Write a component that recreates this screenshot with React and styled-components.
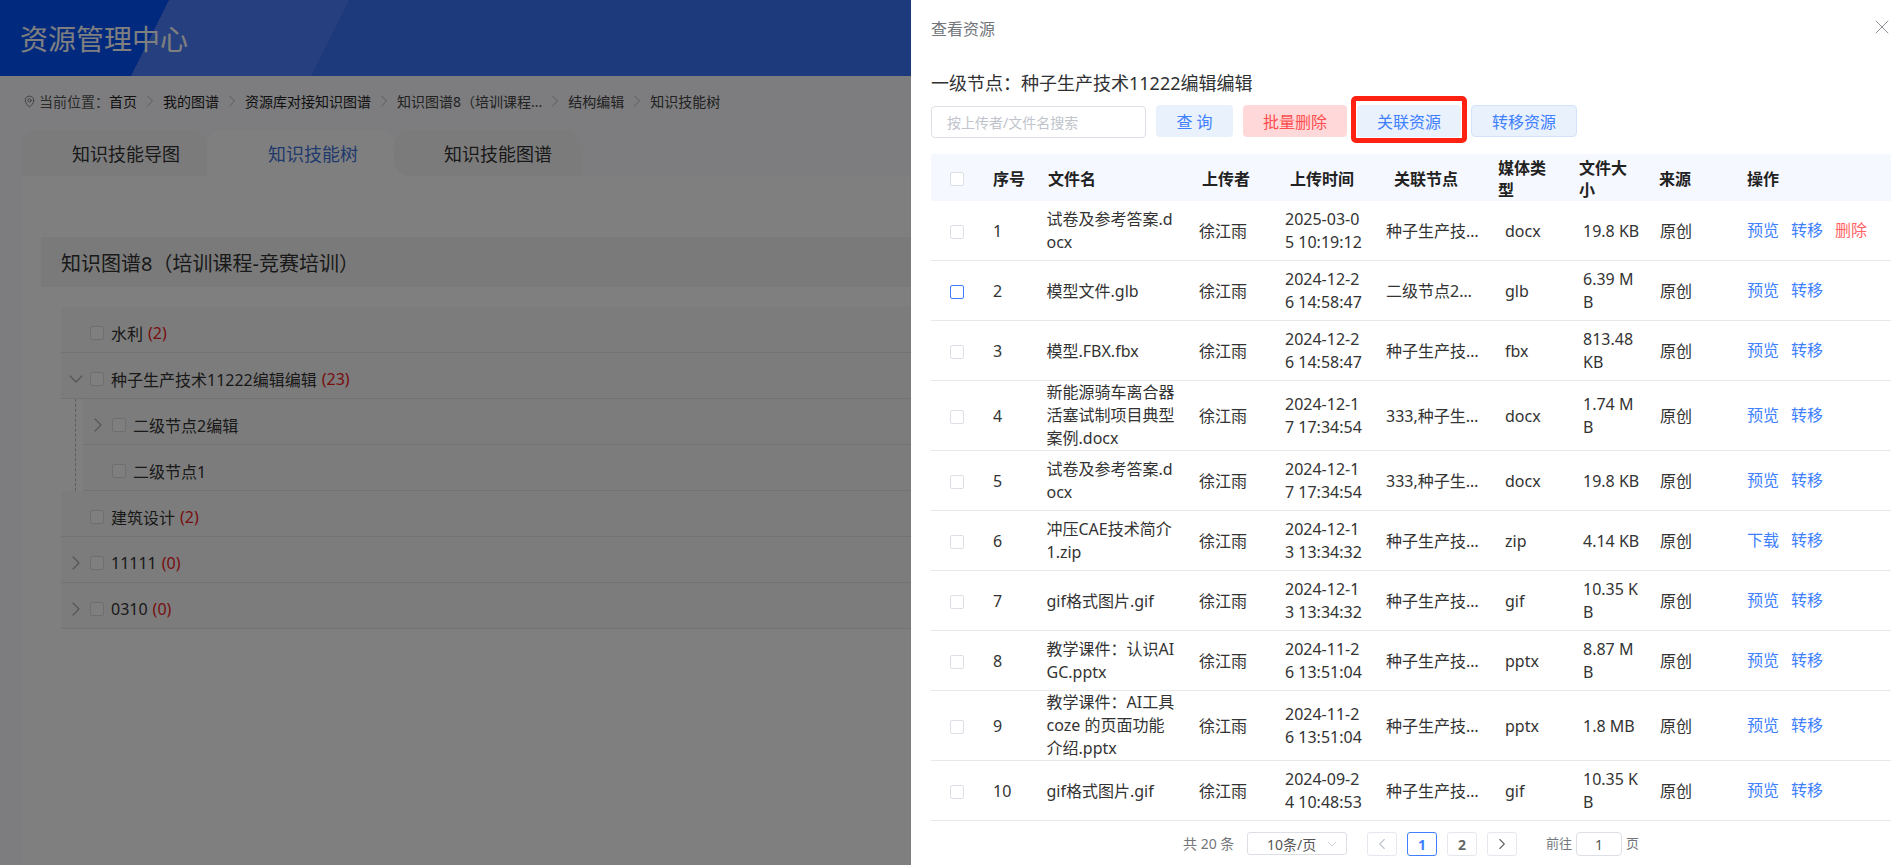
import React from 'react';
import styled, { createGlobalStyle } from 'styled-components';
import { ChevronDown, ChevronLeft, ChevronRight, MapPin, X } from 'lucide-react';

const fontStack = `"Noto Sans", "Noto Sans CJK SC", sans-serif`;

const GlobalStyle = createGlobalStyle`
   html, body {
      margin: 0;
      height: 100%;
      overflow: hidden;
      font-family: ${fontStack};
      background: #fafbfe;
   }
   * {
      box-sizing: border-box;
   }
`;

const Page = styled.div`
   height: 865px;
   overflow: hidden;
   display: flex;
   flex-direction: column;
`;

const Banner = styled.header`
   height: 76px;
   flex-shrink: 0;
   padding-left: 20px;
   display: flex;
   align-items: center;
   background: linear-gradient(116.57deg, #0254ff 0 151px, #4c80ff 151px 312px, #3874f8 312px);
   color: #fff;
   font-size: 28px;
`;

const Crumbs = styled.nav`
   height: 54px;
   flex-shrink: 0;
   padding: 0 0 4px 23px;
   display: flex;
   align-items: center;
   gap: 3px;
   font-size: 14px;
   color: #555;
`;

const CrumbItem = styled.span`
   color: ${(p) => (p.$strong ? '#222' : '#444')};
`;

const CrumbSep = styled(ChevronRight)`
   color: #aaa;
`;

const TabBar = styled.div`
   margin-left: 21px;
   width: 560px;
   height: 46px;
   flex-shrink: 0;
   display: flex;
   background: linear-gradient(transparent 50%, #fff 50%);
`;

const Tab = styled.div`
   width: ${(p) => p.$w}px;
   padding-left: ${(p) => p.$pad}px;
   display: flex;
   align-items: center;
   font-size: 18px;
   color: ${(p) => (p.$active ? '#3f73d8' : '#333')};
   background: ${(p) => (p.$active ? '#fff' : '#f7f7f8')};
   border-radius: ${(p) => (p.$afterActive ? '16px 16px 0 16px' : '16px 16px 0 0')};
`;

const Card = styled.main`
   flex: 1;
   margin-left: 21px;
   padding: 61px 0 0 20px;
   background: #fff;
`;

const CardTitle = styled.h2`
   margin: 0;
   height: 50px;
   padding-left: 20px;
   display: flex;
   align-items: center;
   font-size: 20px;
   font-weight: 400;
   color: #333;
   background: #f5f5f5;
`;

const Tree = styled.div`
   margin: 20px 0 0 20px;
`;

const TreeRow = styled.div`
   position: relative;
   height: 46px;
   margin-left: ${(p) => (p.$child ? 22 : 0)}px;
   padding-top: 7px;
   display: flex;
   align-items: center;
   background: #f9f9f9;
   border-bottom: 1px solid #e6e6e6;
   font-size: 16px;
   color: #333;
`;

const Caret = styled.span`
   width: 29px;
   display: flex;
   justify-content: center;
   padding-left: 1px;
   color: #aaa;
`;

const ChildLine = styled.div`
   position: relative;
   &::before {
      content: '';
      position: absolute;
      left: 14px;
      top: 0;
      bottom: 0;
      border-left: 1px dashed #bbb;
   }
`;

const Count = styled.span`
   margin-left: 5px;
   color: #f02020;
`;

const Box = styled.span`
   display: block;
   flex-shrink: 0;
   width: 14px;
   height: 14px;
   border: 1px solid ${(p) => (p.$active ? '#4080ff' : '#dcdfe6')};
   border-radius: 2px;
   background: #fff;
`;

const TreeBox = styled(Box)`
   margin-right: 7px;
`;

const RowBox = styled(Box)`
   margin-top: 1px;
`;

const Mask = styled.div`
   position: fixed;
   inset: 0;
   background: rgba(0, 0, 0, 0.5);
`;

const Drawer = styled.aside`
   position: fixed;
   top: 0;
   right: 0;
   bottom: 0;
   width: 991px;
   padding: 0 11px 0 20px;
   display: flex;
   flex-direction: column;
   background: #fff;
`;

const DrawerHead = styled.div`
   height: 56px;
   display: flex;
   align-items: center;
   justify-content: space-between;
   font-size: 16px;
   color: #72767b;
`;

const CloseIcon = styled(X)`
   margin: 0 -3px 2px 0;
   color: #909399;
`;

const NodeTitle = styled.div`
   height: 49px;
   padding-top: 14px;
   font-size: 18px;
   line-height: 26px;
   color: #303133;
`;

const Toolbar = styled.div`
   display: flex;
   align-items: flex-start;
   gap: 10px;
   height: 32px;
`;

const SearchInput = styled.input`
   width: 215px;
   height: 32px;
   margin-top: 1px;
   padding: 0 15px;
   border: 1px solid #dcdfe6;
   border-radius: 4px;
   outline: none;
   font-family: ${fontStack};
   font-size: 14px;
   &::placeholder {
      color: #c0c4cc;
   }
`;

const ToolButton = styled.button`
   position: relative;
   width: ${(p) => p.$w}px;
   height: 32px;
   padding: 0;
   border: 1px solid ${(p) => (p.$outlined ? '#d4e3fb' : 'transparent')};
   border-radius: 4px;
   font-family: ${fontStack};
   font-size: 16px;
   color: ${(p) => (p.$danger ? '#ff4d4f' : '#4080ff')};
   background: ${(p) => (p.$danger ? '#ffd9d9' : '#e9f1fd')};
`;

const Highlight = styled.span`
   position: absolute;
   inset: -10px -7px -7px -7px;
   border: 5px solid #ff2213;
   border-radius: 5px;
`;

const TableWrap = styled.div`
   margin-top: 17px;
`;

const Table = styled.table`
   width: 960px;
   table-layout: fixed;
   border-collapse: separate;
   border-spacing: 0;
   font-size: 16px;
   line-height: 23px;
`;

const HeadCell = styled.th`
   height: 47px;
   padding: 3px ${(p) => p.$right || 0}px 0 ${(p) => p.$pad}px;
   font-weight: 700;
   line-height: 22px;
   text-align: left;
   color: #222;
   background: #f5f8ff;
`;

const Cell = styled.td`
   padding: ${(p) => (p.$tight ? 0 : 1)}px ${(p) => p.$right || 0}px 0 ${(p) => p.$pad}px;
   height: ${(p) => p.$h}px;
   border-bottom: 1px solid #e6e8eb;
   color: #333;
   word-break: break-all;
   vertical-align: middle;
`;

const Ellipsis = styled.div`
   white-space: nowrap;
   overflow: hidden;
   text-overflow: ellipsis;
`;

const Ops = styled.div`
   display: flex;
   gap: 12px;
   margin-top: -2px;
`;

const OpLink = styled.a`
   color: ${(p) => (p.$danger ? '#ff6464' : '#4080ff')};
`;

const Pager = styled.div`
   flex: 1;
   padding: 11px 0 0 252px;
   display: flex;
   align-items: flex-start;
   font-size: 14px;
   color: #72767b;
`;

const Total = styled.span`
   width: 64px;
   line-height: 23px;
`;

const PageSize = styled.div`
   width: 100px;
   height: 23px;
   margin-right: 20px;
   padding: 0 6px 0 19px;
   display: flex;
   align-items: center;
   justify-content: space-between;
   border: 1px solid #dcdfe6;
   border-radius: 3px;
   color: #555;
`;

const PageButton = styled.button`
   width: 30px;
   height: 24px;
   margin-right: 10px;
   padding: 0;
   display: flex;
   align-items: center;
   justify-content: center;
   border: 1px solid ${(p) => (p.$active ? '#4080ff' : '#e4e7ed')};
   border-radius: 3px;
   background: #fff;
   font-family: ${fontStack};
   font-size: 14px;
   font-weight: 700;
   color: ${(p) => (p.$active ? '#4080ff' : '#666')};
`;

const JumpLabel = styled.span`
   line-height: 23px;
   font-size: 13px;
   margin-left: ${(p) => p.$left || 0}px;
`;

const JumpInput = styled.input`
   width: 46px;
   height: 24px;
   margin: 0 4px;
   border: 1px solid #dcdfe6;
   border-radius: 4px;
   text-align: center;
   outline: none;
   font-family: ${fontStack};
   font-size: 14px;
   color: #555;
`;

const columns = [
   { title: '', w: 54, head: 19, body: 19 },
   { title: '序号', w: 55, head: 8, body: 8 },
   { title: '文件名', w: 152, head: 8, body: 6.5, right: 15 },
   { title: '上传者', w: 86, head: 10, body: 7 },
   { title: '上传时间', w: 100, head: 12, body: 7, right: 15 },
   { title: '关联节点', w: 112, head: 16, body: 8, right: 6 },
   { title: '媒体类型', w: 82, head: 8, body: 15, headRight: 16 },
   { title: '文件大小', w: 80, head: 7, body: 11, right: 9, headRight: 16 },
   { title: '来源', w: 88, head: 7, body: 8 },
   { title: '操作', w: 151, head: 7, body: 7 },
];

const rows = [
   { id: 1, name: '试卷及参考答案.docx', time: '2025-03-05 10:19:12', node: '种子生产技术11222编辑编辑', type: 'docx', size: '19.8 KB', del: true },
   { id: 2, name: '模型文件.glb', time: '2024-12-26 14:58:47', node: '二级节点2编辑编辑编辑', type: 'glb', size: '6.39 MB', checked: true },
   { id: 3, name: '模型.FBX.fbx', time: '2024-12-26 14:58:47', node: '种子生产技术11222编辑编辑', type: 'fbx', size: '813.48 KB' },
   { id: 4, name: '新能源骑车离合器活塞试制项目典型案例.docx', time: '2024-12-17 17:34:54', node: '333,种子生产技术11222', type: 'docx', size: '1.74 MB', h: 70 },
   { id: 5, name: '试卷及参考答案.docx', time: '2024-12-17 17:34:54', node: '333,种子生产技术11222', type: 'docx', size: '19.8 KB' },
   { id: 6, name: '冲压CAE技术简介1.zip', time: '2024-12-13 13:34:32', node: '种子生产技术11222编辑编辑', type: 'zip', size: '4.14 KB', download: true },
   { id: 7, name: 'gif格式图片.gif', time: '2024-12-13 13:34:32', node: '种子生产技术11222编辑编辑', type: 'gif', size: '10.35 KB' },
   { id: 8, name: '教学课件：认识AIGC.pptx', time: '2024-11-26 13:51:04', node: '种子生产技术11222编辑编辑', type: 'pptx', size: '8.87 MB' },
   { id: 9, name: '教学课件：AI工具coze 的页面功能介绍.pptx', time: '2024-11-26 13:51:04', node: '种子生产技术11222编辑编辑', type: 'pptx', size: '1.8 MB', h: 70 },
   { id: 10, name: 'gif格式图片.gif', time: '2024-09-24 10:48:53', node: '种子生产技术11222编辑编辑', type: 'gif', size: '10.35 KB' },
];

const crumbs = ['我的图谱', '资源库对接知识图谱', '知识图谱8（培训课程...', '结构编辑', '知识技能树'];

const renderCells = (row) => {
   const values = [
      <RowBox $active={row.checked} />,
      row.id,
      row.name,
      '徐江雨',
      row.time,
      <Ellipsis>{row.node}</Ellipsis>,
      row.type,
      row.size,
      '原创',
      <Ops>
         <OpLink>{row.download ? '下载' : '预览'}</OpLink>
         <OpLink>转移</OpLink>
         {row.del && <OpLink $danger>删除</OpLink>}
      </Ops>,
   ];
   return values.map((value, i) => (
      <Cell
         key={i}
         $h={row.h || 60}
         $tight={row.h && i === 2}
         $pad={columns[i].body}
         $right={columns[i].right}>
         {value}
      </Cell>
   ));
};

const ResourceDrawer = () => (
   <Drawer>
      <DrawerHead>
         查看资源
         <CloseIcon size={24} strokeWidth={1} />
      </DrawerHead>
      <NodeTitle>一级节点：种子生产技术11222编辑编辑</NodeTitle>
      <Toolbar>
         <SearchInput placeholder="按上传者/文件名搜索" />
         <ToolButton $w={77}>查 询</ToolButton>
         <ToolButton $w={104} $danger>批量删除</ToolButton>
         <ToolButton $w={104}>
            关联资源
            <Highlight />
         </ToolButton>
         <ToolButton $w={106} $outlined>转移资源</ToolButton>
      </Toolbar>
      <TableWrap>
         <Table>
            <colgroup>
               {columns.map((c, i) => <col key={i} width={c.w} />)}
            </colgroup>
            <thead>
               <tr>
                  {columns.map((c, i) => (
                     <HeadCell key={i} $pad={c.head} $right={c.headRight}>{c.title || <Box />}</HeadCell>
                  ))}
               </tr>
            </thead>
            <tbody>
               {rows.map((row) => <tr key={row.id}>{renderCells(row)}</tr>)}
            </tbody>
         </Table>
      </TableWrap>
      <Pager>
         <Total>共 20 条</Total>
         <PageSize>
            10条/页
            <ChevronDown size={16} strokeWidth={1.2} color="#c0c4cc" />
         </PageSize>
         <PageButton><ChevronLeft size={18} strokeWidth={1.5} color="#c0c4cc" /></PageButton>
         <PageButton $active>1</PageButton>
         <PageButton>2</PageButton>
         <PageButton><ChevronRight size={18} strokeWidth={1.5} color="#666" /></PageButton>
         <JumpLabel $left={19}>前往</JumpLabel>
         <JumpInput readOnly value="1" />
         <JumpLabel>页</JumpLabel>
      </Pager>
   </Drawer>
);

const App = () => (
   <>
      <GlobalStyle />
      <Page>
         <Banner>资源管理中心</Banner>
         <Crumbs>
            <MapPin size={13} strokeWidth={1.3} />
            <span>当前位置：<CrumbItem $strong>首页</CrumbItem></span>
            {crumbs.map((c, i) => (
               <React.Fragment key={c}>
                  <CrumbSep size={20} strokeWidth={1} />
                  <CrumbItem $strong={i < 2}>{c}</CrumbItem>
               </React.Fragment>
            ))}
         </Crumbs>
         <TabBar>
            <Tab $w={186} $pad={51}>知识技能导图</Tab>
            <Tab $w={187} $pad={61} $active>知识技能树</Tab>
            <Tab $w={187} $pad={50} $afterActive>知识技能图谱</Tab>
         </TabBar>
         <Card>
            <CardTitle>知识图谱8（培训课程-竞赛培训）</CardTitle>
            <Tree>
               <TreeRow><Caret /><TreeBox />水利<Count>(2)</Count></TreeRow>
               <TreeRow>
                  <Caret><ChevronDown size={24} strokeWidth={1.2} /></Caret>
                  <TreeBox />种子生产技术11222编辑编辑<Count>(23)</Count>
               </TreeRow>
               <ChildLine>
                  <TreeRow $child>
                     <Caret><ChevronRight size={24} strokeWidth={1.2} /></Caret>
                     <TreeBox />二级节点2编辑
                  </TreeRow>
                  <TreeRow $child><Caret /><TreeBox />二级节点1</TreeRow>
               </ChildLine>
               <TreeRow><Caret /><TreeBox />建筑设计<Count>(2)</Count></TreeRow>
               <TreeRow>
                  <Caret><ChevronRight size={24} strokeWidth={1.2} /></Caret>
                  <TreeBox />11111<Count>(0)</Count>
               </TreeRow>
               <TreeRow>
                  <Caret><ChevronRight size={24} strokeWidth={1.2} /></Caret>
                  <TreeBox />0310<Count>(0)</Count>
               </TreeRow>
            </Tree>
         </Card>
      </Page>
      <Mask />
      <ResourceDrawer />
   </>
);

export default App;
